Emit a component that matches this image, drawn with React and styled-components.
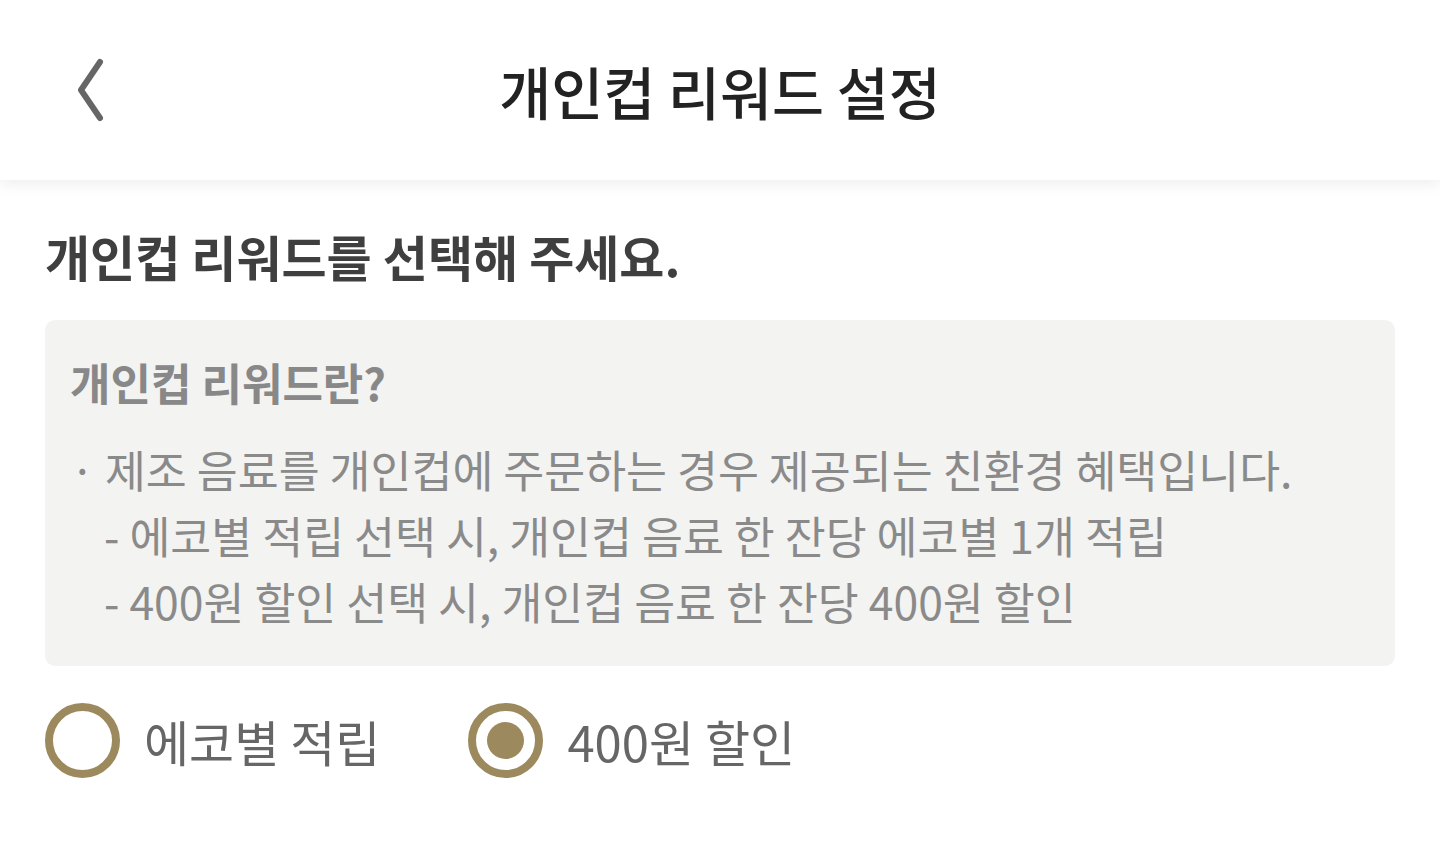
import React, { useState } from "react";
import styled, { createGlobalStyle } from "styled-components";

const GlobalStyle = createGlobalStyle`
  html, body { margin: 0; padding: 0; background: #ffffff; }
  body { font-family: "Noto Sans CJK KR", "Noto Sans", sans-serif; }
  * { box-sizing: border-box; }
`;

const Page = styled.div`
  width: 1440px;
  min-height: 852px;
  background: #fff;
`;

const Header = styled.header`
  position: relative;
  height: 180px;
  display: flex;
  align-items: center;
  justify-content: center;
  background: #fff;
  box-shadow: 0 4px 14px rgba(0, 0, 0, 0.07);
`;

const BackButton = styled.button`
  position: absolute;
  left: 60px;
  top: 50%;
  transform: translateY(-50%);
  width: 60px;
  height: 80px;
  border: 0;
  background: none;
  padding: 0;
  display: flex;
  align-items: center;
  justify-content: center;
  cursor: pointer;
`;

const Title = styled.h1`
  margin: 0;
  font-size: 56.5px;
  font-weight: 500;
  color: #222;
  line-height: 1;
`;

const Content = styled.main`
  padding: 44px 45px 0;
  display: flex;
  flex-direction: column;
`;

const Heading = styled.h2`
  margin: 0;
  font-size: 49px;
  font-weight: 700;
  color: #3f3f3f;
  line-height: 64px;
`;

const InfoBox = styled.section`
  margin-top: 32px;
  background: #f3f3f2;
  border-radius: 10px;
  padding: 32px 25px 32px;
`;

const InfoTitle = styled.h3`
  margin: 0 0 24px;
  font-size: 44px;
  font-weight: 700;
  color: #888;
  line-height: 60px;
`;

const InfoLine = styled.p`
  margin: 0;
  font-size: 44.5px;
  font-weight: 400;
  color: #8a8a8a;
  line-height: 66px;
  padding-left: ${(p) => (p.$indent ? "34px" : "0")};
  white-space: nowrap;
`;

const RadioRow = styled.div`
  margin-top: 37px;
  display: flex;
  align-items: center;
  gap: 88px;
`;

const RadioLabel = styled.label`
  display: flex;
  align-items: center;
  gap: 24px;
  cursor: pointer;
  font-size: 49px;
  color: #666;
  line-height: 1;
`;

const RadioCircle = styled.span`
  width: 75px;
  height: 75px;
  border-radius: 50%;
  border: 8px solid #9c8a5e;
  display: flex;
  align-items: center;
  justify-content: center;
  &::after {
    content: "";
    width: 37px;
    height: 37px;
    border-radius: 50%;
    background: #9c8a5e;
    display: ${(p) => (p.$checked ? "block" : "none")};
  }
`;

const HiddenInput = styled.input`
  display: none;
`;

export default function App() {
  const [choice, setChoice] = useState("discount");
  const options = [
    { id: "star", label: "에코별 적립" },
    { id: "discount", label: "400원 할인" },
  ];
  return (
    <Page>
      <GlobalStyle />
      <Header>
        <BackButton aria-label="뒤로">
          <svg width="40" height="64" viewBox="0 0 40 64" fill="none">
            <path
              d="M30 4 L11 32 L30 60"
              stroke="#666"
              strokeWidth="6"
              strokeLinecap="round"
              strokeLinejoin="round"
            />
          </svg>
        </BackButton>
        <Title>개인컵 리워드 설정</Title>
      </Header>
      <Content>
        <Heading>개인컵 리워드를 선택해 주세요.</Heading>
        <InfoBox>
          <InfoTitle>개인컵 리워드란?</InfoTitle>
          <InfoLine>· 제조 음료를 개인컵에 주문하는 경우 제공되는 친환경 혜택입니다.</InfoLine>
          <InfoLine $indent>- 에코별 적립 선택 시, 개인컵 음료 한 잔당 에코별 1개 적립</InfoLine>
          <InfoLine $indent>- 400원 할인 선택 시, 개인컵 음료 한 잔당 400원 할인</InfoLine>
        </InfoBox>
        <RadioRow>
          {options.map((o) => (
            <RadioLabel key={o.id}>
              <HiddenInput
                type="radio"
                name="reward"
                checked={choice === o.id}
                onChange={() => setChoice(o.id)}
              />
              <RadioCircle $checked={choice === o.id} />
              {o.label}
            </RadioLabel>
          ))}
        </RadioRow>
      </Content>
    </Page>
  );
}
